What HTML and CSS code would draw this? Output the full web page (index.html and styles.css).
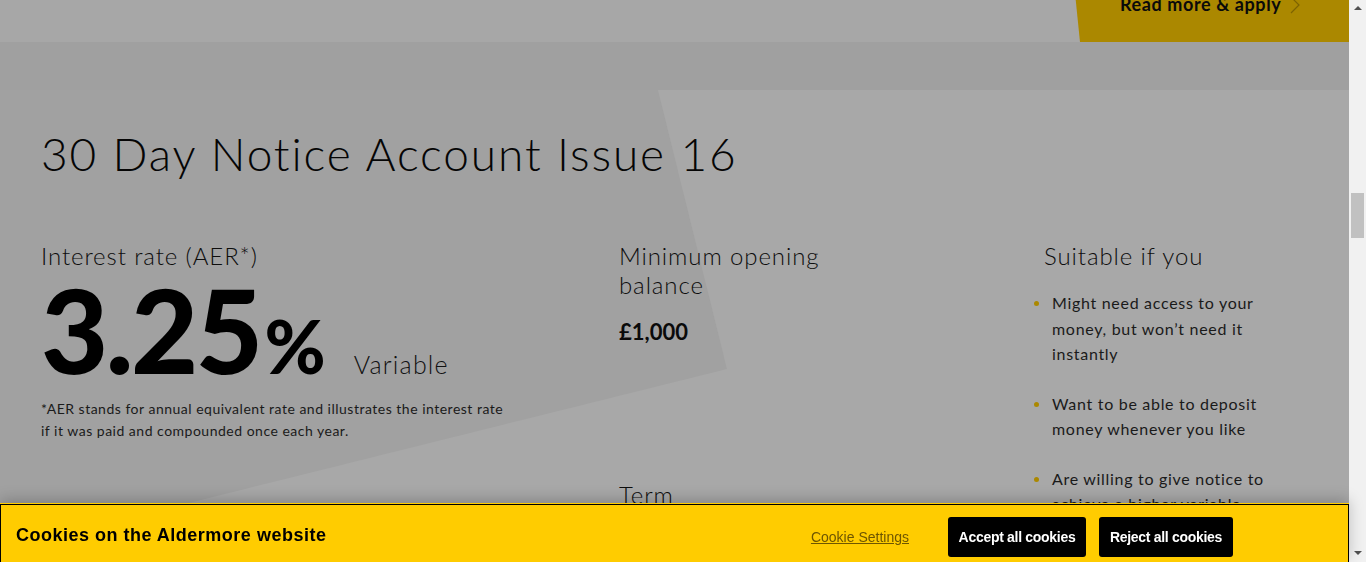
FILE: index.html
```html
<!DOCTYPE html>
<html lang="en">
<head>
<meta charset="utf-8">
<title>30 Day Notice Account Issue 16</title>
<link rel="stylesheet" href="styles.css">
</head>
<body>
<div class="viewport">
  <div class="page">
    <div class="top-band">
      <a class="apply-btn" href="#">Read more &amp; apply
        <svg class="chev" width="10" height="18" viewBox="0 0 10 18"><polyline points="1,1 9,9 1,17" fill="none" stroke="#7d6300" stroke-width="1.2"/></svg>
      </a>
    </div>
    <div class="strip"></div>
    <section class="product">
      <h1 class="title">30 Day Notice Account Issue 16</h1>
      <div class="cols">
        <div class="col col-rate">
          <h3 class="col-head">Interest rate (AER*)</h3>
          <div class="rate-row">
            <span class="rate-num">3.25</span><span class="rate-pct">%</span><span class="rate-type">Variable</span>
          </div>
          <p class="footnote">*AER stands for annual equivalent rate and illustrates the interest rate<br>if it was paid and compounded once each year.</p>
        </div>
        <div class="col col-min">
          <h3 class="col-head">Minimum opening<br>balance</h3>
          <p class="amount">£1,000</p>
          <h3 class="col-head term">Term</h3>
        </div>
        <div class="col col-suit">
          <h3 class="col-head suit-head">Suitable if you</h3>
          <ul class="suit-list">
            <li>Might need access to your<br>money, but won’t need it<br>instantly</li>
            <li>Want to be able to deposit<br>money whenever you like</li>
            <li>Are willing to give notice to<br>achieve a higher variable<br>rate</li>
          </ul>
        </div>
      </div>
    </section>
  </div>
  <div class="scrollbar">
    <div class="sb-arrow up"></div>
    <div class="sb-track"><div class="sb-thumb"></div></div>
    <div class="sb-arrow down"></div>
  </div>
</div>
<div class="cookie-bar">
  <h2 class="cookie-title">Cookies on the Aldermore website</h2>
  <div class="cookie-actions">
    <a class="cookie-settings" href="#">Cookie Settings</a>
    <button class="cookie-btn accept">Accept all cookies</button>
    <button class="cookie-btn reject">Reject all cookies</button>
  </div>
</div>
</body>
</html>
```

FILE: styles.css
```css
html, body {
  margin: 0;
  padding: 0;
  height: 100%;
  overflow: hidden;
}
body {
  font-family: Lato, "Open Sans", sans-serif;
  color: #111;
  background: #a8a8a8;
}
.viewport {
  display: flex;
  height: 562px;
  width: 1366px;
}
.page {
  width: 1349px;
  flex: none;
  overflow: hidden;
}
.top-band {
  height: 42px;
  background: #a7a7a7;
  display: flex;
  justify-content: flex-end;
  overflow: hidden;
}
.apply-btn {
  display: flex;
  align-items: flex-start;
  gap: 9px;
  width: 274px;
  box-sizing: border-box;
  padding: 0 0 0 45px;
  margin-top: -7px;
  height: 49px;
  background: #ab8800;
  clip-path: polygon(0 0, 100% 0, 100% 100%, 5px 100%);
  color: #0a0a0a;
  font-weight: 700;
  font-size: 18px;
  line-height: 22px;
  text-decoration: none;
  letter-spacing: 0.6px;
  white-space: nowrap;
}
.chev { margin-top: 3px; }
.strip {
  height: 48px;
  background: #a0a0a0;
}
.product {
  position: relative;
  height: 472px;
  background: #a8a8a8;
  padding: 0 0 0 41px;
  box-sizing: border-box;
}
.product::before {
  content: "";
  position: absolute;
  inset: 0;
  background: #a1a1a1;
  clip-path: polygon(0 0, 658px 0, 727px 279px, 0 460px);
}
.title, .cols { position: relative; }
.title {
  margin: 0;
  padding-top: 36px;
  font-size: 46px;
  line-height: 55px;
  font-weight: 300;
  letter-spacing: 1.9px;
  color: #050505;
  white-space: nowrap;
}
.cols {
  display: grid;
  grid-template-columns: 578px 417px 300px;
  margin-top: 60px;
}
.col-head {
  margin: 0;
  font-size: 24px;
  line-height: 29px;
  font-weight: 300;
  letter-spacing: 0.9px;
  color: #0d0d0d;
}
.rate-row {
  display: flex;
  align-items: baseline;
  margin-top: 2px;
  height: 116px;
}
.rate-num {
  font-size: 116px;
  line-height: 116px;
  font-weight: 900;
  letter-spacing: -2.5px;
  color: #000;
}
.rate-pct {
  font-size: 74px;
  line-height: 1;
  font-weight: 900;
  margin-left: 4px;
  color: #000;
}
.rate-type {
  font-size: 25px;
  line-height: 1;
  font-weight: 300;
  margin-left: 28px;
  letter-spacing: 1.2px;
}
.footnote {
  margin: 10px 0 0;
  font-size: 14px;
  line-height: 22px;
  color: #1a1a1a;
  letter-spacing: 0.5px;
  white-space: nowrap;
}
.amount {
  margin: 19px 0 0;
  font-size: 22px;
  line-height: 28px;
  font-weight: 700;
  color: #0a0a0a;
}
.term { margin-top: 134px; }
.suit-head { margin-left: 8px; }
.suit-list {
  list-style: none;
  margin: 20px 0 0;
  padding: 0;
}
.suit-list li {
  position: relative;
  padding-left: 16px;
  font-size: 16px;
  line-height: 25.5px;
  color: #1a1a1a;
  margin-bottom: 24px;
  letter-spacing: 0.7px;
  white-space: nowrap;
}
.suit-list li::before {
  content: "";
  position: absolute;
  left: -2px;
  top: 11px;
  width: 5px;
  height: 5px;
  border-radius: 50%;
  background: #ab8800;
}
.scrollbar {
  width: 17px;
  flex: none;
  background: #f1f1f1;
  display: flex;
  flex-direction: column;
  align-items: center;
}
.sb-arrow {
  width: 0;
  height: 0;
  border-left: 4px solid transparent;
  border-right: 4px solid transparent;
}
.sb-arrow.up {
  margin-top: 6px;
  border-bottom: 4px solid #505050;
}
.sb-arrow.down {
  margin-bottom: 7px;
  border-top: 4px solid #505050;
}
.sb-track {
  flex: 1;
  width: 100%;
  display: flex;
  justify-content: center;
}
.sb-thumb {
  width: 13px;
  height: 45px;
  margin-top: 183px;
  background: #c1c1c1;
}
.cookie-bar {
  position: fixed;
  left: 0;
  bottom: 0;
  width: 1349px;
  height: 58px;
  box-sizing: border-box;
  background: #ffcc00;
  border: 1px solid #000;
  border-bottom: none;
  box-shadow: 0 -1px 0 #ffcc00, 0 -4px 14px rgba(0, 0, 0, 0.22);
  display: flex;
  align-items: center;
  justify-content: space-between;
  padding: 0 115px 0 15px;
  font-family: "Liberation Sans", Arial, sans-serif;
}
.cookie-title {
  margin: 4px 0 0;
  font-size: 18px;
  font-weight: 700;
  color: #000;
  letter-spacing: 0.5px;
}
.cookie-actions {
  display: flex;
  align-items: center;
  margin-top: 6px;
}
.cookie-settings {
  font-size: 14px;
  color: #6e5600;
  text-decoration: underline;
  margin-right: 39px;
}
.cookie-btn {
  font-family: "Liberation Sans", Arial, sans-serif;
  height: 40px;
  border: none;
  border-radius: 3px;
  background: #000;
  color: #fff;
  font-weight: 700;
  font-size: 14px;
  letter-spacing: -0.3px;
  padding: 0;
  white-space: nowrap;
}
.cookie-btn.accept { width: 138px; }
.cookie-btn.reject { width: 134px; margin-left: 13px; }
```
